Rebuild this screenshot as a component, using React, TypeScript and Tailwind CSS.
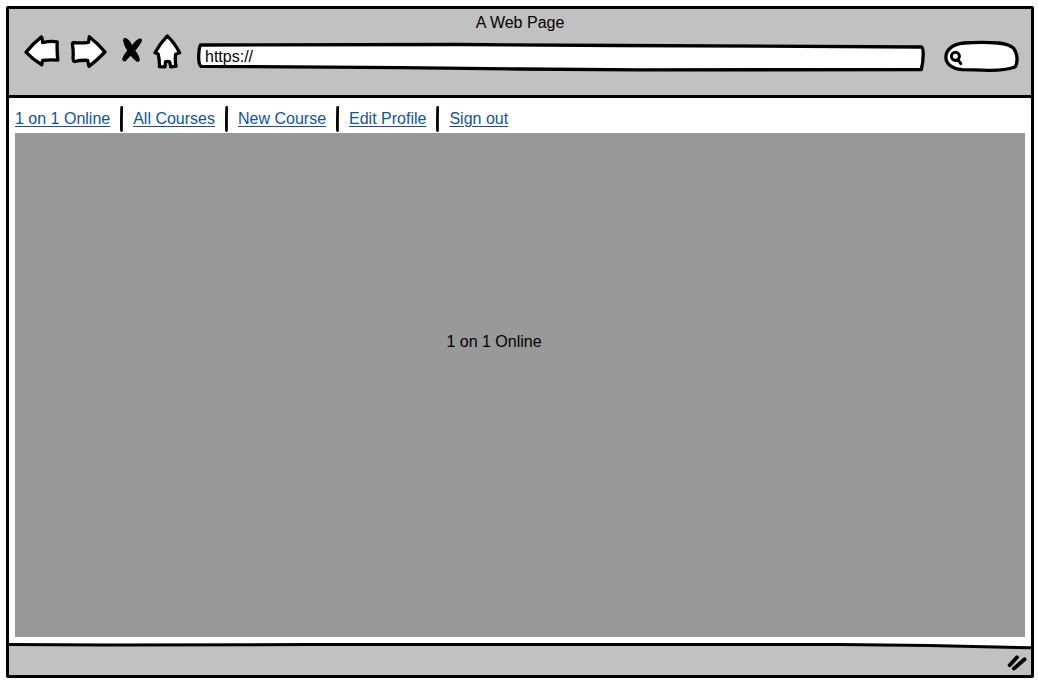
import type { ReactNode } from "react";

const links = ["1 on 1 Online", "All Courses", "New Course", "Edit Profile", "Sign out"];

function ToolButton({ label, children }: { label: string; children: ReactNode }) {
  return (
    <button type="button" aria-label={label} className="shrink-0 cursor-pointer">
      {children}
    </button>
  );
}

const outline = {
  fill: "#fff",
  stroke: "#000",
  strokeWidth: 3.3,
  strokeLinejoin: "round" as const,
  strokeLinecap: "round" as const,
};

function BackIcon() {
  return (
    <svg viewBox="24 33 36 40" className="h-10 w-9" aria-hidden="true">
      <path {...outline} d="M26 52.2Q33 43.5 41.5 36.9Q42.4 39 42.7 42.6Q50 40.8 57.2 41.8Q56.8 51 57.8 60.2Q50 59.6 42.5 60.5L41.8 64.8Q33 59.8 26 52.2Z" />
    </svg>
  );
}

function ForwardIcon() {
  return (
    <svg viewBox="70 33 38 40" className="h-10 w-[38px]" aria-hidden="true">
      <path {...outline} d="M72.5 45Q72 42.6 74 42.7Q81 43.4 88.5 42.3L89.3 36.7Q98 43.5 105 52Q97 60.5 89 66.3L87.6 60.3Q81 60 74.5 61.5Q72.6 61.7 73.2 55Q73.4 50 72.5 45Z" />
    </svg>
  );
}

function StopIcon() {
  return (
    <svg viewBox="118 33 25 40" className="h-10 w-[25px]" aria-hidden="true">
      <path
        d="M125.3 40.3Q130.5 47 137.6 59.6M139.8 40.8Q134 47.5 124.6 59.2"
        fill="none"
        stroke="#000"
        strokeWidth="4.2"
        strokeLinecap="round"
      />
      <path d="M123.4 38.6C127 37.5 129.5 40.5 132.3 45C135 40.5 138.5 38 141.8 39C141.3 43.5 138.2 47.3 135.3 50.6C138.3 54.5 140 58 139.4 61C136.3 62 133 59.3 130.7 55.8C128 58.8 125 60.9 122.6 60.6C122 57.5 124.5 53.8 127.3 50.6C124.3 46.5 122.7 42 123.4 38.6Z" />
    </svg>
  );
}

function HomeIcon() {
  return (
    <svg viewBox="153 33 30 40" className="h-10 w-[30px]" aria-hidden="true">
      <path {...outline} d="M167.3 35.9Q175 43.5 179.6 52.8L175.6 54.2Q174.8 60 176 66.2L170.8 66.8L169.6 61.8Q167.5 60.8 165.5 61.8L165 66.8L159.4 66.6Q159.7 60.5 158.2 54L155 52.8Q160 43.5 167.3 35.9Z" />
    </svg>
  );
}

function AddressBar() {
  return (
    <div className="relative h-10 min-w-0 grow">
      <svg viewBox="197 33 729 40" preserveAspectRatio="none" className="absolute inset-0 size-full" aria-hidden="true">
        <path {...outline} vectorEffect="non-scaling-stroke" d="M200.5 45L460 44.5L620 45.5L922.500 47Q924 47.5 924.2 53Q924.3 62 922.3 69.7L640 69.8L520 69L400 67.7L201 66.3Q198.5 64.5 198.7 56Q199 47.5 200.5 45Z" />
      </svg>
      <input
        type="text"
        aria-label="Address"
        defaultValue="https://"
        className="relative mt-3 h-6 w-full bg-transparent px-2 leading-6 outline-none"
      />
    </div>
  );
}

function SearchBox() {
  return (
    <div className="relative ml-1 h-10 w-[77px] shrink-0">
      <svg viewBox="943 33 77 40" className="absolute inset-0 size-full" aria-hidden="true">
        <path {...outline} d="M945.900 57C946 50 952 44.300 964 43Q982 41.600 998 43Q1010 44.200 1013.800 48.500Q1017.500 54 1017 60Q1016.800 65 1014.800 67Q1005 70.500 989 70.300Q974 69.700 962 69.700C951 68.700 945.800 63 945.900 57Z" />
        <circle cx="955.4" cy="56.3" r="4" fill="none" stroke="#000" strokeWidth="3" />
        <path d="M955.5 60.4H958.5L960.8 63.6" fill="none" stroke="#000" strokeWidth="3" strokeLinecap="round" />
      </svg>
      <input
        type="search"
        aria-label="Search"
        className="relative mt-3 h-6 w-full bg-transparent pr-3 pl-6 outline-none"
      />
    </div>
  );
}

function Separator() {
  return (
    <svg viewBox="0 0 3 26" className="h-[26px] w-[3px]" aria-hidden="true">
      <path d="M1.7 1.4Q1.3 13 1.5 24.6" stroke="#000" strokeWidth="2.8" strokeLinecap="round" fill="none" />
    </svg>
  );
}

export default function App() {
  return (
    <div className="flex min-h-screen bg-white pt-1.5 pr-1 pb-1 pl-1.5 font-['Liberation_Sans',Arial,sans-serif] text-base text-black">
      <div className="flex min-w-0 grow flex-col rounded-[2px] border-3 border-black">
        <header className="border-b-3 border-black bg-[#c1c1c1] pb-[22px]">
          <h1 className="pt-[3px] text-center leading-[21px]">A Web Page</h1>
          <div className="flex items-center gap-3.5 pr-[11px] pl-[15px]">
            <div className="flex gap-2.5">
              <ToolButton label="Back"><BackIcon /></ToolButton>
              <ToolButton label="Forward"><ForwardIcon /></ToolButton>
              <ToolButton label="Stop"><StopIcon /></ToolButton>
              <ToolButton label="Home"><HomeIcon /></ToolButton>
            </div>
            <AddressBar />
            <SearchBox />
          </div>
        </header>

        <main className="flex grow flex-col px-1.5 pb-1.5">
          <nav aria-label="Main" className="pt-2 pb-px">
            <ul className="flex items-center gap-2.5">
              {links.map((label, i) => (
                <li key={label} className="flex items-center gap-2.5">
                  {i > 0 && <Separator />}
                  <a href="#" className="leading-[26px] whitespace-nowrap text-[#0f5599] underline underline-offset-2">
                    {label}
                  </a>
                </li>
              ))}
            </ul>
          </nav>
          <section className="grow bg-[#999999] pt-[197px] pr-[52px] text-center">
            <p className="leading-6">1 on 1 Online</p>
          </section>
        </main>

        <footer className="bg-[#c1c1c1]">
          <svg viewBox="0 0 1022 7" preserveAspectRatio="none" className="block h-[7px] w-full" aria-hidden="true">
            <path d="M0 0H1022V4.5L880 1.5H0Z" fill="#fff" />
            <path d="M0 1.5L100 2L300 1.5H830L920 2.5L1022 4.7" fill="none" stroke="#000" strokeWidth="3" vectorEffect="non-scaling-stroke" />
          </svg>
          <div className="flex h-[25px] items-center justify-end pr-1">
            <svg viewBox="1007 653 20 20" className="size-5" aria-hidden="true">
              <path
                d="M1009.6 665.2L1017 657.2M1013.8 668.6L1024.600 659.200"
                stroke="#000"
                strokeWidth="3.8"
                strokeLinecap="round"
              />
            </svg>
          </div>
        </footer>
      </div>
    </div>
  );
}
